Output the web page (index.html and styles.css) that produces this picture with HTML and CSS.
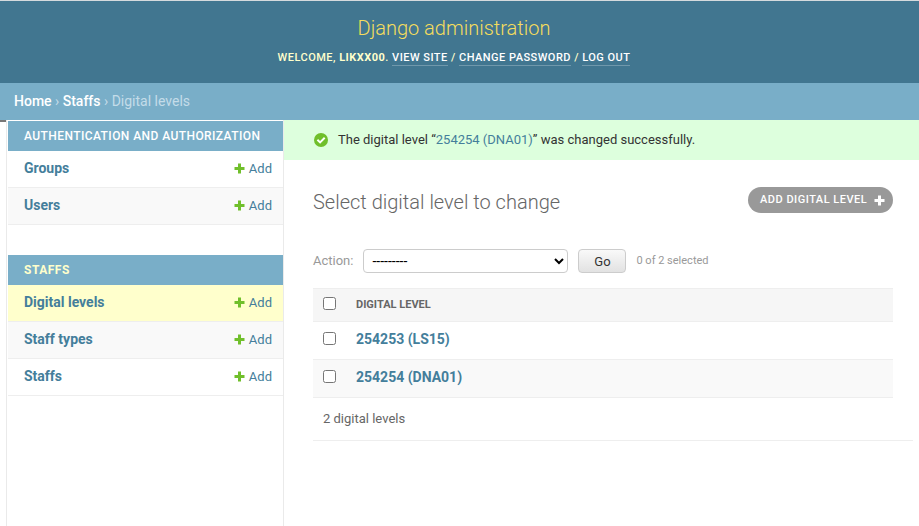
FILE: index.html
```html
<!DOCTYPE html>
<html lang="en">
<head>
<meta charset="utf-8">
<title>Select digital level to change | Django site admin</title>
<link rel="stylesheet" href="styles.css">
</head>
<body>
<svg class="defs" width="0" height="0"><symbol id="plus" viewBox="0 0 11 11"><path d="M4 .5h3V4h3.5v3H7v3.500H4V7H.5V4H4z"/></symbol></svg>
<header class="header">
  <div class="site-name">Django administration</div>
  <div class="user-tools"><span class="t">Welcome, <strong>likxx00</strong>. <a>View site</a> / <a>Change password</a> / <a>Log out</a></span></div>
</header>
<nav class="breadcrumbs"><span class="t"><a>Home</a> › <a>Staffs</a> › Digital levels</span></nav>
<div class="main">
  <div class="gutter"></div>
  <aside class="sidebar">
    <section class="module">
      <h2><span class="auth">Authentication and Authorization</span></h2>
      <div class="row"><b>Groups</b><a><svg><use href="#plus"/></svg><span>Add</span></a></div>
      <div class="row alt"><b>Users</b><a><svg><use href="#plus"/></svg><span>Add</span></a></div>
    </section>
    <section class="module current">
      <h2><span>Staffs</span></h2>
      <div class="row selected"><b>Digital levels</b><a><svg><use href="#plus"/></svg><span>Add</span></a></div>
      <div class="row alt"><b>Staff types</b><a><svg><use href="#plus"/></svg><span>Add</span></a></div>
      <div class="row"><b>Staffs</b><a><svg><use href="#plus"/></svg><span>Add</span></a></div>
    </section>
  </aside>
  <main class="content">
    <div class="message"><svg viewBox="0 0 14 14"><circle cx="7" cy="7" r="7"/><path d="M3.4 6.8 6.1 9.4 10.7 4.8"/></svg><span class="t">The digital level “<a>254254 (DNA01)</a>” was changed successfully.</span></div>
    <div class="title"><h1>Select digital level to change</h1><a class="add-button"><span>Add digital level</span><svg><use href="#plus"/></svg></a></div>
    <div class="actions"><label for="action">Action:</label><select id="action"><option>---------</option></select><button>Go</button><span class="counter">0 of 2 selected</span></div>
    <div class="results">
      <div class="record head"><input type="checkbox"><span>Digital level</span></div>
      <div class="record"><input type="checkbox"><a>254253 (LS15)</a></div>
      <div class="record alt"><input type="checkbox"><a>254254 (DNA01)</a></div>
    </div>
    <div class="paginator">2 digital levels</div>
  </main>
</div>
</body>
</html>
```
FILE: styles.css
```css
* { box-sizing: border-box; }
body { margin: 0; height: 526px; overflow: hidden; display: flex; flex-direction: column; background: #fff; color: #333; font: 13px/16px Roboto, sans-serif; }
.defs { position: absolute; }
h1, h2 { margin: 0; }
.header { flex: none; height: 83px; padding-top: 15px; border-top: 1px solid #d5dadd; background: #417690; color: #ffc; text-align: center; }
.site-name { font-size: 20px; font-weight: 300; line-height: 24px; color: #f5dd5d; padding-right: 11px; }
.user-tools { margin-top: 10px; padding-right: 11px; font-size: 11px; font-weight: 500; line-height: 16px; letter-spacing: .48px; text-transform: uppercase; }
.user-tools strong { font-weight: 700; }
.user-tools a { color: #fff; padding-bottom: 1px; border-bottom: 1px solid rgba(255,255,255,.25); }
.breadcrumbs { flex: none; height: 37px; padding: 10px 14px; background: #79aec8; color: #c4dce8; font-size: 14px; }
.breadcrumbs a { color: #fff; font-weight: 500; }
.main { flex: 1; display: flex; min-height: 0; }
.gutter { width: 6px; height: 2px; background: #777; }
.sidebar { width: 278px; border: solid #eaeaea; border-width: 0 1px; padding: 1px 0 0 1px; }
.module { margin-bottom: 30px; }
.module h2 { height: 30px; padding: 7px 16px; background: #79aec8; color: #fff; font-size: 12px; font-weight: 500; line-height: 16px; letter-spacing: .5px; text-transform: uppercase; white-space: nowrap; }
.auth { letter-spacing: .42px; }
.module.current h2 { color: #ffc; font-weight: 700; }
.row { height: 37px; padding: 0 11px 2px 16px; display: flex; align-items: center; justify-content: space-between; border-bottom: 1px solid #eee; color: #447e9b; }
.row b { font-size: 14px; font-weight: 700; }
.row a { display: flex; align-items: center; gap: 4px; padding-top: 1px; }
.row a span { padding-top: 1px; }
.row svg { width: 11px; height: 11px; fill: #70bf2b; }
.alt { background: #f9f9f9; }
.selected { background: #ffc; }
.content { flex: 1; }
.message { height: 40px; padding-left: 30px; display: flex; align-items: center; gap: 10px; background: #dfd; }
.message svg { width: 14px; height: 14px; fill: #70bf2b; }
.message path { fill: none; stroke: #fff; stroke-width: 2; }
.message a { color: #447e9b; }
.title { height: 26px; margin: 27px 26px 0 29px; display: flex; justify-content: space-between; }
h1 { color: #666; font-size: 20px; font-weight: 300; line-height: 30px; }
.add-button { width: 145px; height: 26px; padding: 0 8px 0 12px; border-radius: 13px; display: flex; align-items: center; justify-content: space-between; background: #999; color: #fff; font-size: 11px; font-weight: 500; letter-spacing: .5px; text-transform: uppercase; white-space: nowrap; }
.add-button svg { width: 11px; height: 11px; fill: #fff; }
.actions { height: 24px; margin: 36px 0 0 29px; display: flex; align-items: center; color: #999; }
.actions select { width: 205px; height: 24px; margin-left: 10px; padding: 0 0 0 4px; border: 1px solid #ccc; border-radius: 4px; background: #fff; color: #000; font: 14px Roboto, sans-serif; }
.actions button { width: 48px; height: 24px; margin-left: 10px; padding: 1px 0 0; border: 1px solid #ccc; border-radius: 4px; background: linear-gradient(#f9f9f9, #e2e2e2); color: #333; font: 13px Roboto, sans-serif; }
.counter { margin-left: 10px; font-size: 11px; }
.results { margin: 15px 26px 0 29px; border-top: 1px solid #eee; }
.record { height: 38px; padding: 0 0 3px 10px; display: flex; align-items: center; border-bottom: 1px solid #eee; color: #447e9b; font-size: 14px; font-weight: 700; }
.record input { width: 13px; height: 13px; margin: 0 20px 1px 0; }
.head { height: 33px; padding-bottom: 1px; background: #f6f6f6; color: #666; font-size: 11px; text-transform: uppercase; }
.head input { margin-bottom: 2px; }
.paginator { height: 43px; margin: 0 6px 0 29px; padding: 13px 10px; border-bottom: 1px solid #eee; color: #666; }
```
